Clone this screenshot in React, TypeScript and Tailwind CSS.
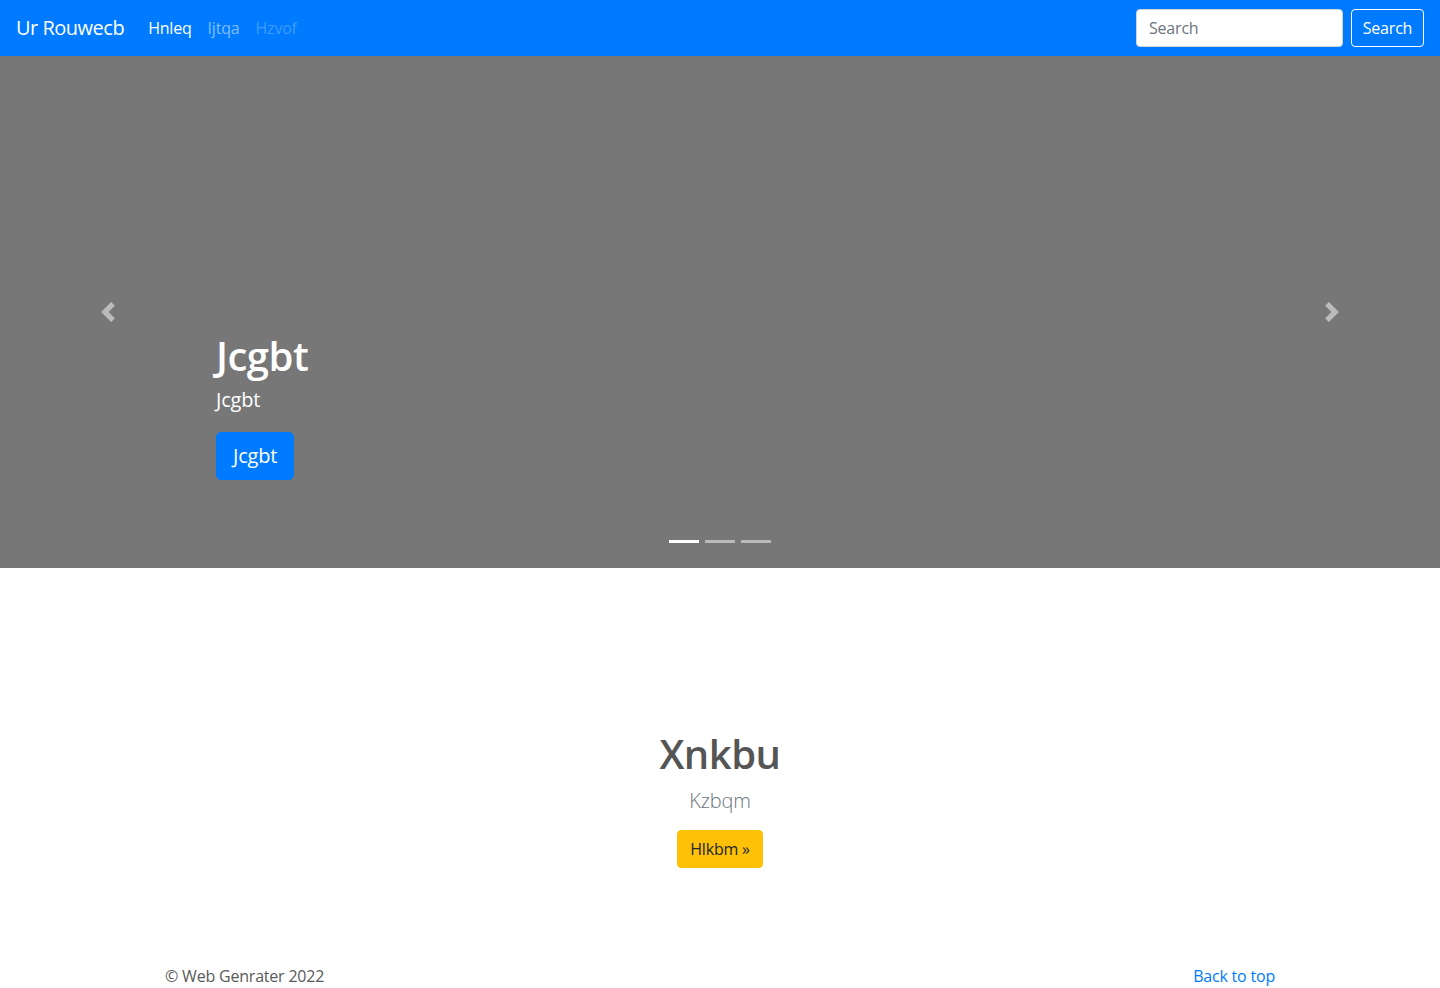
import React from "react";

const font = { fontFamily: '"Open Sans", "Noto Sans", Arial, sans-serif' };

function Chevron({ dir }: { dir: "prev" | "next" }) {
  return (
    <svg width="20" height="20" viewBox="0 0 8 8" fill="#fff">
      {dir === "prev" ? (
        <path d="M5.25 0l-4 4 4 4 1.5-1.5L4.25 4l2.5-2.5L5.25 0z" />
      ) : (
        <path d="M2.75 0l-1.5 1.5L3.75 4l-2.5 2.5L2.75 8l4-4-4-4z" />
      )}
    </svg>
  );
}

export default function App() {
  return (
    <div className="min-h-[988px] bg-white text-[16px] leading-6 text-[#5a5a5a] tracking-[-0.2px]" style={font}>
      {/* navbar */}
      <nav className="h-14 bg-[#007bff] flex items-center px-4">
        <a className="text-[20px] leading-[30px] text-white mr-4 tracking-[-0.5px]">Ur Rouwecb</a>
        <ul className="flex items-center">
          <li className="px-2 text-white">Hnleq</li>
          <li className="px-2 text-white/50">Ijtqa</li>
          <li className="px-2 text-white/25">Hzvof</li>
        </ul>
        <form className="ml-auto flex items-center">
          <input
            placeholder="Search"
            className="w-[207px] h-[38px] rounded border border-[#ced4da] bg-white px-3 text-[16px] text-[#495057] placeholder:text-[#6c757d] mr-2 outline-none"
          />
          <button className="w-[73px] h-[38px] rounded border border-white text-white text-[16px]">Search</button>
        </form>
      </nav>

      {/* carousel */}
      <div className="relative h-[512px] bg-[#777777]">
        <a className="absolute left-0 top-0 bottom-0 w-[15%] flex items-center justify-center opacity-50">
          <Chevron dir="prev" />
        </a>
        <a className="absolute right-0 top-0 bottom-0 w-[15%] flex items-center justify-center opacity-50">
          <Chevron dir="next" />
        </a>
        <div className="absolute left-[15%] right-[15%] bottom-[52px] py-5 text-white text-left">
          <h1 className="text-[40px] leading-[48px] font-semibold mb-[5px] tracking-[-0.5px]">Jcgbt</h1>
          <p className="text-[20px] leading-[30px] mb-[17px]">Jcgbt</p>
          <p className="mb-4">
            <a className="inline-block bg-[#007bff] border border-[#007bff] text-white text-[20px] leading-[30px] px-4 py-2 rounded-[5px]">Jcgbt</a>
          </p>
        </div>
        <ol className="absolute left-0 right-0 bottom-[25px] flex justify-center">
          <li className="w-[30px] h-[3px] mx-[3px] bg-white" />
          <li className="w-[30px] h-[3px] mx-[3px] bg-white/50" />
          <li className="w-[30px] h-[3px] mx-[3px] bg-white/50" />
        </ol>
      </div>

      {/* main */}
      <section className="pt-[162px] pb-[72px] text-center">
        <h1 className="text-[40px] leading-[48px] font-semibold text-[#555555] mb-2 tracking-[-0.5px]">Xnkbu</h1>
        <p className="text-[20px] leading-[30px] font-light text-[#6c757d] mb-[14px]">Kzbqm</p>
        <a className="inline-block bg-[#ffc107] text-[#212529] px-3 py-[6px] rounded text-[16px] leading-6 border border-[#ffc107]">
          Hlkbm »
        </a>
      </section>

      {/* footer */}
      <footer className="max-w-[1140px] mx-auto px-[15px] pt-[24px] flex justify-between">
        <p>© Web Genrater 2022</p>
        <a className="text-[#007bff]">Back to top</a>
      </footer>
    </div>
  );
}
